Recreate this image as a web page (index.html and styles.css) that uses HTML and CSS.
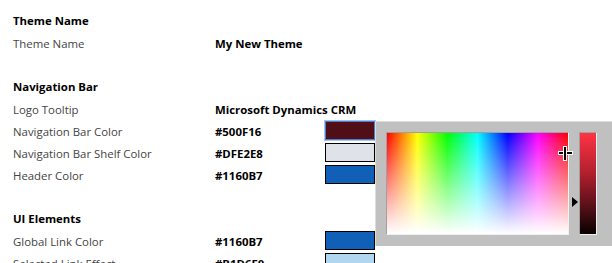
FILE: index.html
```html
<!DOCTYPE html>
<html lang="en">
<head>
    <meta charset="UTF-8">
    <title>Theme</title>
    <link rel="stylesheet" href="styles.css">
</head>
<body>
    <div class="page">
        <div class="section">
            <div class="heading">Theme Name</div>
            <div class="row"><span class="label">Theme Name</span><span class="value">My New Theme</span></div>
        </div>

        <div class="section">
            <div class="heading">Navigation Bar</div>
            <div class="row"><span class="label">Logo Tooltip</span><span class="value">Microsoft Dynamics CRM</span></div>
            <div class="row"><span class="label">Navigation Bar Color</span><span class="value">#500F16</span><span class="swatch focused" style="background:#500F16"></span></div>
            <div class="row"><span class="label">Navigation Bar Shelf Color</span><span class="value">#DFE2E8</span><span class="swatch" style="background:#DFE2E8"></span></div>
            <div class="row"><span class="label">Header Color</span><span class="value">#1160B7</span><span class="swatch" style="background:#1160B7"></span></div>
        </div>

        <div class="section">
            <div class="heading">UI Elements</div>
            <div class="row"><span class="label">Global Link Color</span><span class="value">#1160B7</span><span class="swatch" style="background:#1160B7"></span></div>
            <div class="row"><span class="label">Selected Link Effect</span><span class="value">#B1D6F0</span><span class="swatch" style="background:#B1D6F0"></span></div>
        </div>

        <div class="picker">
            <div class="spectrum">
                <div class="crosshair"></div>
            </div>
            <div class="arrow"></div>
            <div class="huebar"></div>
        </div>
    </div>
</body>
</html>
```

FILE: styles.css
```css
body { margin: 0; font-family: "Open Sans", "Noto Sans", sans-serif; font-size: 11.4px; color: #444; background: #fff; }
.page { position: relative; padding: 10px 0 0 13px; height: 253px; overflow: hidden; }
.section { margin-bottom: 22px; }
.heading { height: 22px; line-height: 22px; font-weight: bold; color: #000; }
.row { display: flex; align-items: center; height: 22px; white-space: nowrap; }
.label { width: 202px; flex: none; }
.value { width: 110px; flex: none; font-weight: bold; color: #000; }
.swatch { flex: none; width: 48px; height: 17px; margin-top: -1px; border: 1px solid #000; }
.swatch.focused { border-color: #4a7fd0; box-shadow: 0 0 0 1px #a8c4ec; }

.picker { position: absolute; left: 375px; top: 121px; width: 240px; height: 125px; background: #c0c0c0; border-top: 1px solid #dcdcdc; border-left: 1px solid #dcdcdc; box-sizing: border-box; display: flex; align-items: flex-start; padding: 10px 0 0 10px; }
.spectrum { position: relative; width: 181px; height: 101px; border: 1px solid; border-color: #a0a0a0 #f0f0f0 #f0f0f0 #a0a0a0;
    background: linear-gradient(to bottom, rgba(255,255,255,0), #fff),
        linear-gradient(to right, #f00 0%, #ff0 16.7%, #0f0 33.3%, #0ff 50%, #00f 66.7%, #f0f 83.3%, #f00 100%); }
.crosshair { position: absolute; left: 172px; top: 14px; width: 13px; height: 13px; }
.crosshair::before, .crosshair::after { content: ""; position: absolute; background: #000; outline: 1px solid #fff; }
.crosshair::before { left: 0; top: 5px; width: 13px; height: 2px; }
.crosshair::after { left: 5px; top: 0; width: 2px; height: 13px; }
.arrow { width: 0; height: 0; margin: 65px 0 0 3px; border-left: 6px solid #000; border-top: 5px solid transparent; border-bottom: 5px solid transparent; }
.huebar { width: 16px; height: 101px; margin-left: 1px; border: 1px solid; border-color: #a0a0a0 #f0f0f0 #f0f0f0 #a0a0a0;
    background: linear-gradient(to bottom, #ff3344, #b0202c 40%, #500f16 75%, #080000); }
```
